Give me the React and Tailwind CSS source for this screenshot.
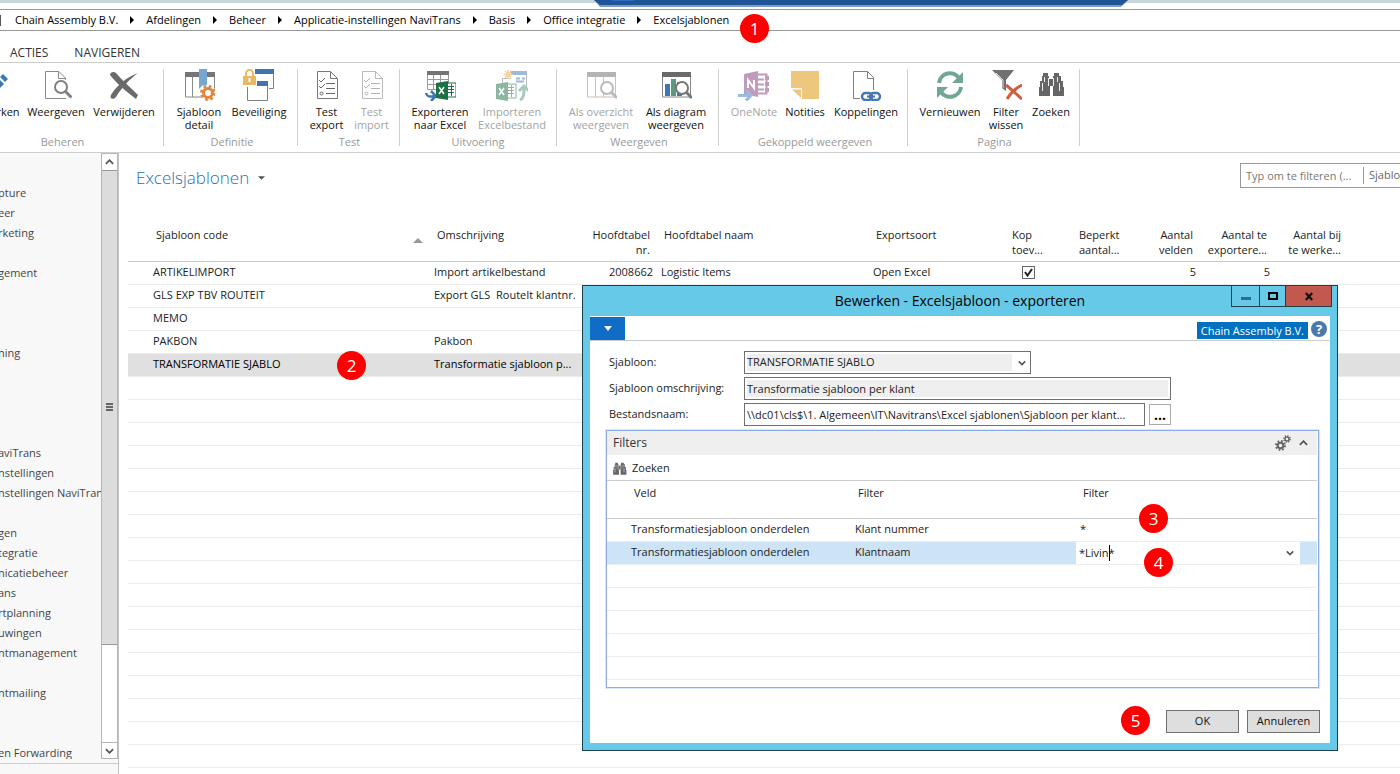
import { useState } from 'react';

const crumbs = [
  'Chain Assembly B.V.',
  'Afdelingen',
  'Beheer',
  'Applicatie-instellingen NaviTrans',
  'Basis',
  'Office integratie',
  'Excelsjablonen',
];

const navItems = [
  'pture', 'eer', 'rketing', '', 'gement', '', '', '', 'ning', '', '', '', '', 'aviTrans',
  'nstellingen', 'nstellingen NaviTrans', '', 'gen', 'tegratie', 'nicatiebeheer', 'ans',
  'rtplanning', 'uwingen', 'ntmanagement', '', 'ntmailing', '', '', 'en Forwarding',
];

const templates = [
  { code: 'ARTIKELIMPORT', name: 'Import artikelbestand', table: '2008662', tableName: 'Logistic Items', kind: 'Open Excel', header: true, fields: 5, exported: 5 },
  { code: 'GLS EXP TBV ROUTEIT', name: 'Export GLS\u00a0 RouteIt klantnr.' },
  { code: 'MEMO', name: '' },
  { code: 'PAKBON', name: 'Pakbon' },
  { code: 'TRANSFORMATIE SJABLO', name: 'Transformatie sjabloon p...', selected: true },
];

function Icon({ children, className }) {
  return (
    <svg viewBox="0 0 32 32" className={className ?? 'h-8 w-8'} fill="none" aria-hidden="true">
      {children}
    </svg>
  );
}

function PencilIcon() {
  return (
    <Icon>
      <path d="M6 30l3-8 12-12 5 5-12 12z" fill="#3c78b8" />
      <path d="M22 8l3-3 5 5-3 3z" fill="#3c78b8" />
    </Icon>
  );
}

function ViewIcon() {
  return (
    <Icon>
      <path d="M26 29.5H5.500V2.500H19l6.500 6.500v3M18.500 2.500V9.500H25.500" stroke="#8a8a8a" />
      <path d="M19 11h8v15h-8z" fill="#fff" />
      <circle cx="21" cy="18" r="6" stroke="#808080" strokeWidth="2" fill="#fff" />
      <path d="M25 22l6.500 6.500" stroke="#808080" strokeWidth="3" />
    </Icon>
  );
}

function DeleteIcon() {
  return (
    <Icon>
      <path d="M2 6c0-3 4-4 6-2 6 7 13 13 22 22l-2 4C19 23 9 15 2 6z" fill="#6a6a6a" />
      <path d="M30 4C22 10 14 18 8 28c-2 3-7 2-5-2C9 16 19 8 30 4z" fill="#6a6a6a" />
    </Icon>
  );
}

function TemplateIcon() {
  return (
    <Icon>
      <path d="M2.500 3.500h29V28H2.500z" stroke="#8a8a8a" fill="#fff" />
      <path d="M2 3h30v5H2z" fill="#757575" />
      <path d="M9.500 8v20M23.500 8v20" stroke="#8a8a8a" />
      <path d="M16 0h8v20l-4-4-4 4z" fill="#78a6d4" />
      <circle cx="25" cy="24" r="8" fill="#fff" />
      <circle cx="25" cy="24" r="4.500" stroke="#e08640" strokeWidth="3" />
      <circle cx="25" cy="24" r="6.500" stroke="#e08640" strokeWidth="3" strokeDasharray="2.600 2.500" />
    </Icon>
  );
}

function SecurityIcon() {
  return (
    <Icon>
      <path d="M12.500 1.500h18v18H26" stroke="#808080" />
      <path d="M12 0h19v5H12z" fill="#3f75ad" />
      <path d="M4.500 14.500h20v17h-20z" stroke="#808080" fill="#fff" />
      <path d="M4 12h21v5H4z" fill="#3f75ad" />
      <path d="M0 5h14v13H0z" fill="#fff" />
      <path d="M3 8V4.500a3.500 3.500 0 0 1 7 0V8" stroke="#e8b866" strokeWidth="2" />
      <path d="M0 7h13v9H0z" fill="#e8b866" />
      <path d="M6.500 9v4" stroke="#fff" strokeWidth="2" />
    </Icon>
  );
}

function ChecklistIcon() {
  return (
    <Icon>
      <path d="M6.500 2.500h13l7 7v20h-20zM19.500 2.500v7h7" stroke="#777" />
      <path d="M8 11l2 2 4-4M8 17l2 2 4-4M15 14.500h9M15 19.500h9M15 24.500h9" stroke="#666" />
      <circle cx="10.500" cy="24.500" r="1.500" stroke="#666" />
    </Icon>
  );
}

function ExcelBadge({ x, y }) {
  return (
    <g>
      <path d={`M${x + 9} ${y + 2}h11v14h-11z`} fill="#fff" stroke="#1d7044" />
      <path d={`M${x + 12} ${y + 5.5}h6M${x + 12} ${y + 8.5}h6M${x + 12} ${y + 11.5}h6M${x + 15.5} ${y + 3}v12`} stroke="#1d7044" />
      <path d={`M${x} ${y + 2}l12-2v19l-12-2z`} fill="#1d7044" />
      <path d={`M${x + 3} ${y + 6}l5 7M${x + 8} ${y + 6}l-5 7`} stroke="#fff" strokeWidth="1.5" />
    </g>
  );
}

function ExportIcon() {
  return (
    <Icon>
      <path d="M3.500 3.500h21v17h-21zM3.500 10.500h21M3.500 15.500h21M9.500 6v14M16.500 6v14" stroke="#9a9a9a" />
      <path d="M3 2h22v4H3z" fill="#757575" />
      <path d="M2 24c1 4 4 4 8 3M7 22l5 5-5 5" stroke="#3c78b8" strokeWidth="2.500" />
      <ExcelBadge x={12} y={12} />
    </Icon>
  );
}

function ImportIcon() {
  return (
    <Icon>
      <path d="M13.500 3.500h17v16M6.500 14V9.500h8" stroke="#777" />
      <path d="M15 2h16v4H15z" fill="#3f75ad" />
      <path d="M20 9.500h4M20 12.500h8M26 9.500h3" stroke="#3f75ad" strokeWidth="2" />
      <path d="M12 1v9M7.500 5.500h9M9 2l6 6.500M15 2L9 8.500" stroke="#eda53c" strokeWidth="1.500" />
      <path d="M24 31c4-2 4-6 4-12M23 22l5-5 5 5" stroke="#4f967c" strokeWidth="3" />
      <ExcelBadge x={0} y={13} />
    </Icon>
  );
}

function OverviewIcon({ chart }) {
  return (
    <Icon>
      <path d="M2.500 3.500h28V28h-28z" stroke="#888" />
      <path d="M2 3h29v5H2z" fill="#6a6a6a" />
      {chart ? (
        <>
          <path d="M5 15h5v12H5z" fill="#3c78b8" />
          <path d="M11 10h5v17h-5z" fill="#5b9a80" />
          <path d="M17 13h5v14h-5z" fill="#3c78b8" />
        </>
      ) : (
        <path d="M10.500 8v20M18.500 8v20" stroke="#888" />
      )}
      <circle cx="22" cy="19" r="6" stroke="#777" strokeWidth="2" fill="#fff" />
      <path d="M26 23l6 6" stroke="#777" strokeWidth="3" />
    </Icon>
  );
}

function OneNoteIcon() {
  return (
    <Icon>
      <path d="M19.500 5.500h9v19h-9M19 10.500h7M19 15.500h7M19 20.500h7" stroke="#80397b" strokeWidth="2" />
      <path d="M27 7h4v4h-4zM27 13h4v4h-4zM27 19h4v4h-4z" fill="#80397b" />
      <path d="M6 5l14-3v26L6 25z" fill="#80397b" />
      <path d="M10 19v-8l6 8v-8" stroke="#fff" strokeWidth="2" />
      <path d="M0 26.500h11M8 21.500l5 5-5 5" stroke="#3c78b8" strokeWidth="3" />
    </Icon>
  );
}

function NoteIcon() {
  return (
    <Icon>
      <path d="M2 2h28v28H13V19H2z" fill="#edc77e" />
      <path d="M3 20.500h9V29z" fill="#edc77e" />
    </Icon>
  );
}

function LinkIcon() {
  return (
    <Icon>
      <path d="M10 29.500H3.500V2.500h14l6 6V21M17.500 2.500v7h6" stroke="#808080" />
      <rect x="12" y="24" width="10" height="7" rx="3.500" stroke="#4478b0" strokeWidth="2.500" />
      <rect x="20" y="24" width="10" height="7" rx="3.500" stroke="#4478b0" strokeWidth="2.500" />
      <path d="M17 27.500h8" stroke="#4478b0" strokeWidth="2" />
    </Icon>
  );
}

function RefreshIcon() {
  return (
    <Icon>
      <path d="M5 14A11 11 0 0 1 25 9" stroke="#71a792" strokeWidth="4" />
      <path d="M29 3v11H18z" fill="#71a792" />
      <path d="M27 18A11 11 0 0 1 7 23" stroke="#71a792" strokeWidth="4" />
      <path d="M3 29V18h11z" fill="#71a792" />
    </Icon>
  );
}

function ClearFilterIcon() {
  return (
    <Icon>
      <path d="M2 1h22l-8 10v11l-4-3v-8z" fill="#707070" />
      <path d="M6 4l7 7v8" stroke="#ddd" />
      <path d="M16 16c5 4 10 9 16 14M32 16c-6 3-12 9-15 14" stroke="#cf5f43" strokeWidth="3" />
    </Icon>
  );
}

function BinocularsIcon({ className }) {
  return (
    <Icon className={className}>
      <path d="M8 4h5v3h1v3h4V7h1V4h5v3h2v5h2v6h1v9h-11V17h-3v10H4v-9h1v-6h2V7h1z" fill="#666" />
      <path d="M9.500 8v5M13.500 9v8M18.500 9v8M22.500 8v5M7.500 14v8M24.500 14v8" stroke="#eee" />
    </Icon>
  );
}

const ribbon = [
  {
    label: 'Beheren',
    className: '-ml-10 w-[204px] pl-[6px]',
    items: [
      { lines: ['Bewerken'], icon: <PencilIcon />, width: 'w-[56px]' },
      { lines: ['Weergeven'], icon: <ViewIcon />, width: 'w-[68px]' },
      { lines: ['Verwijderen'], icon: <DeleteIcon />, width: 'w-[68px]' },
    ],
  },
  {
    label: 'Definitie',
    className: 'w-[134px] pl-[7px]',
    items: [
      { lines: ['Sjabloon', 'detail'], icon: <TemplateIcon />, width: 'w-[56px]' },
      { lines: ['Beveiliging'], icon: <SecurityIcon />, width: 'w-[64px]' },
    ],
  },
  {
    label: 'Test',
    className: 'w-[102px] pl-[6px]',
    items: [
      { lines: ['Test', 'export'], icon: <ChecklistIcon />, width: 'w-[45px]' },
      { lines: ['Test', 'import'], icon: <ChecklistIcon />, width: 'w-[45px]', disabled: true },
    ],
  },
  {
    label: 'Uitvoering',
    className: 'w-[157px] pl-[4px]',
    items: [
      { lines: ['Exporteren', 'naar Excel'], icon: <ExportIcon />, width: 'w-[72px]' },
      { lines: ['Importeren', 'Excelbestand'], icon: <ImportIcon />, width: 'w-[72px]', disabled: true },
    ],
  },
  {
    label: 'Weergeven',
    className: 'w-[162px] pl-[7px]',
    items: [
      { lines: ['Als overzicht', 'weergeven'], icon: <OverviewIcon />, width: 'w-[74px]', disabled: true },
      { lines: ['Als diagram', 'weergeven'], icon: <OverviewIcon chart />, width: 'w-[76px]' },
    ],
  },
  {
    label: 'Gekoppeld weergeven',
    className: 'w-[189px] pl-[8px]',
    items: [
      { lines: ['OneNote'], icon: <OneNoteIcon />, width: 'w-[54px]', disabled: true },
      { lines: ['Notities'], icon: <NoteIcon />, width: 'w-[48px]' },
      { lines: ['Koppelingen'], icon: <LinkIcon />, width: 'w-[74px]' },
    ],
  },
  {
    label: 'Pagina',
    className: 'w-[172px] pl-[6px]',
    items: [
      { lines: ['Vernieuwen'], icon: <RefreshIcon />, width: 'w-[72px]' },
      { lines: ['Filter', 'wissen'], icon: <ClearFilterIcon />, width: 'w-[40px]' },
      { lines: ['Zoeken'], icon: <BinocularsIcon />, width: 'w-[50px]' },
    ],
  },
];

function RibbonButton({ item }) {
  return (
    <button
      type="button"
      disabled={item.disabled}
      className={`${item.width} flex shrink-0 flex-col items-center whitespace-nowrap ${item.disabled ? 'text-[#a3a3a3]' : 'text-[#111]'}`}
    >
      <span className={item.disabled ? 'opacity-50' : ''}>{item.icon}</span>
      <span className="mt-1 text-[11px] leading-[13px]">
        {item.lines.map((line) => (
          <span key={line} className="block">{line}</span>
        ))}
      </span>
    </button>
  );
}

function Ribbon() {
  return (
    <div className="flex h-[90px] shrink-0 overflow-hidden border-b border-[#cfcfcf] pt-[6px]">
      {ribbon.map((group) => (
        <section key={group.label} className={`${group.className} flex h-[77px] shrink-0 flex-col border-r border-[#d0d0d0]`}>
          <div className="flex flex-1">
            {group.items.map((item) => (
              <RibbonButton key={item.lines.join(' ')} item={item} />
            ))}
          </div>
          <p className="-mb-[3px] -ml-1 text-center text-[11px] leading-[14px] text-[#999]">{group.label}</p>
        </section>
      ))}
    </div>
  );
}

function AddressBar() {
  return (
    <nav className="mt-[5px] flex h-[22px] shrink-0 items-center border-y border-[#999] text-[11px] text-black">
      <span className="mr-[14px] h-[11px] w-px bg-[#555]" />
      {crumbs.map((crumb, i) => (
        <span key={crumb} className="flex items-center whitespace-nowrap">
          {i > 0 && (
            <svg viewBox="0 0 4 8" className="mx-3 h-2 w-1" aria-hidden="true">
              <path d="M0 0l4 4-4 4z" fill="#000" />
            </svg>
          )}
          <a href="#">{crumb}</a>
        </span>
      ))}
    </nav>
  );
}

function Chevron({ up, className }) {
  return (
    <svg viewBox="0 0 10 6" className={className ?? 'h-[6px] w-[9px]'} fill="none" aria-hidden="true">
      <path d={up ? 'M1 5l4-4 4 4' : 'M1 1l4 4 4-4'} stroke="#555" strokeWidth="2" />
    </svg>
  );
}

function Sidebar() {
  return (
    <aside className="flex w-[119px] shrink-0 flex-col border-r border-[#c4c4c4] bg-[#f8f8f8]">
      <div className="flex min-h-0 flex-1">
        <ul className="min-w-0 flex-1 overflow-hidden pt-[30px] text-[11px] leading-5 text-[#444]">
          {navItems.map((item, i) => (
            <li key={i} className="-ml-[2px] h-5 whitespace-nowrap">
              <a href="#">{item}</a>
            </li>
          ))}
        </ul>
        <div className="flex w-[17px] flex-col border border-[#b5b5b5] bg-white">
          <div className="flex h-4 items-center justify-center">
            <Chevron up />
          </div>
          <div className="min-h-0 flex-1">
            <div className="flex h-[83%] flex-col items-center justify-center gap-[1px] border-y border-[#999] bg-[#dcdcdc]">
              <span className="h-[2px] w-[7px] bg-[#666]" />
              <span className="h-[2px] w-[7px] bg-[#666]" />
              <span className="h-[2px] w-[7px] bg-[#666]" />
            </div>
          </div>
          <div className="flex h-4 items-center justify-center border-t border-[#b5b5b5]">
            <Chevron />
          </div>
        </div>
      </div>
      <div className="mt-1 h-[11px] border-t border-[#ccc]" />
    </aside>
  );
}

function TemplateTable() {
  const fillers = Array.from({ length: 18 });
  return (
    <table className="w-full table-fixed border-collapse text-left text-[11px] text-[#222]">
      <colgroup>
        <col className="w-[21px]" />
        <col className="w-[281px]" />
        <col className="w-[150px]" />
        <col className="w-[77px]" />
        <col className="w-[212px]" />
        <col className="w-[136px]" />
        <col className="w-[67px]" />
        <col className="w-[54px]" />
        <col className="w-[74px]" />
        <col className="w-[74px]" />
        <col className="w-[74px]" />
        <col />
      </colgroup>
      <thead>
        <tr className="h-[34px] border-b border-[#ccc] align-top leading-[15px] [&>th]:px-[7px] [&>th]:py-0 [&>th]:font-normal [&>th]:whitespace-nowrap">
          <th />
          <th>
            <div className="flex justify-between">
              Sjabloon code
              <svg viewBox="0 0 10 5" className="mt-[11px] h-[5px] w-[10px]" aria-hidden="true">
                <path d="M0 5l5-5 5 5z" fill="#999" />
              </svg>
            </div>
          </th>
          <th>Omschrijving</th>
          <th className="text-right">Hoofdtabel<br />nr.</th>
          <th>Hoofdtabel naam</th>
          <th>Exportsoort</th>
          <th>Kop<br />toev...</th>
          <th>Beperkt<br />aantal...</th>
          <th className="text-right">Aantal<br />velden</th>
          <th className="text-right">Aantal te<br />exportere...</th>
          <th className="text-right">Aantal bij<br />te werke...</th>
          <th />
        </tr>
      </thead>
      <tbody>
        {templates.map((row) => (
          <tr
            key={row.code}
            className={`h-[23px] border-b border-[#ececec] [&>td]:px-1 [&>td]:py-0 [&>td]:whitespace-nowrap ${row.selected ? 'bg-[#e0e0e0] text-black' : ''}`}
          >
            <td />
            <td>{row.code}</td>
            <td>{row.name}</td>
            <td className="text-right">{row.table}</td>
            <td>{row.tableName}</td>
            <td>{row.kind}</td>
            <td>
              {row.header && (
                <span className="relative ml-[13px] block h-[13px] w-[13px]">
                  <input
                    type="checkbox"
                    defaultChecked
                    aria-label="Kop toevoegen"
                    className="block h-[13px] w-[13px] appearance-none border border-[#666] bg-white"
                  />
                  <svg viewBox="0 0 13 13" className="pointer-events-none absolute inset-0" fill="none" aria-hidden="true">
                    <path d="M3 6l2.500 3.500L10 3" stroke="#222" strokeWidth="2" />
                  </svg>
                </span>
              )}
            </td>
            <td />
            <td className="text-right">{row.fields}</td>
            <td className="text-right">{row.exported}</td>
            <td />
            <td />
          </tr>
        ))}
        {fillers.map((_, i) => (
          <tr key={i} className="h-[23px] border-b border-[#ececec]">
            <td colSpan={12} />
          </tr>
        ))}
      </tbody>
    </table>
  );
}

function MainPanel() {
  return (
    <main className="min-w-0 flex-1 overflow-hidden pl-[9px]">
      <div className="flex h-[74px] items-start justify-between">
        <h1 className="flex items-center gap-[9px] pt-[13px] pl-2 text-[17px] leading-6 font-light text-[#1f6fb2]">
          Excelsjablonen
          <svg viewBox="0 0 8 4" className="h-1 w-[7px]" aria-hidden="true">
            <path d="M0 0h8l-4 4z" fill="#555" />
          </svg>
        </h1>
        <div className="mt-[10px] flex h-[25px] w-[160px] items-center overflow-hidden border border-r-0 border-[#999] text-[11px] whitespace-nowrap">
          <input
            aria-label="Typ om te filteren"
            placeholder="Typ om te filteren (..."
            className="h-full w-[122px] shrink-0 pl-[5px] placeholder:text-[#777]"
          />
          <span className="h-[17px] w-px shrink-0 bg-[#999]" />
          <button type="button" className="pl-[5px] text-[#666]">Sjabloon code</button>
        </div>
      </div>
      <TemplateTable />
    </main>
  );
}

function FilterPanel() {
  const [filter, setFilter] = useState('*Livin*');
  return (
    <section className="mt-1 mr-[11px] ml-4 h-[258px] border border-[#8aaee2] pr-px shadow-[0_0_0_1px_#dbe7f8]">
      <div className="flex h-[24px] items-center bg-[#efefef] pr-[9px] pl-[6px]">
        <h2 className="flex-1 text-[12px] text-[#333]">Filters</h2>
        <svg viewBox="0 0 16 16" className="mr-[8px] h-4 w-4" fill="none" aria-hidden="true">
          <circle cx="5.500" cy="10.500" r="2.800" stroke="#666" strokeWidth="2" />
          <circle cx="5.500" cy="10.500" r="4.500" stroke="#666" strokeWidth="2" strokeDasharray="1.700 1.830" />
          <circle cx="12" cy="4" r="2" stroke="#666" strokeWidth="1.500" />
          <circle cx="12" cy="4" r="3.200" stroke="#666" strokeWidth="1.500" strokeDasharray="1.200 1.310" />
        </svg>
        <Chevron up className="h-[6px] w-[9px]" />
      </div>
      <div className="flex h-[26px] items-center border-b border-[#ccc] pt-[2px] pl-[4px]">
        <button type="button" className="flex items-center gap-1 text-[11px] text-[#222]">
          <BinocularsIcon className="h-[18px] w-[17px]" />
          Zoeken
        </button>
      </div>
      <table className="w-full table-fixed border-collapse text-left text-[11px] text-[#222]">
        <colgroup>
          <col className="w-[20px]" />
          <col className="w-[224px]" />
          <col className="w-[225px]" />
          <col />
        </colgroup>
        <thead>
          <tr className="h-[37px] border-b border-[#ccc] align-top leading-[15px] [&>th]:px-[7px] [&>th]:pt-1 [&>th]:font-normal">
            <th />
            <th>Veld</th>
            <th>Filter</th>
            <th>Filter</th>
          </tr>
        </thead>
        <tbody>
          <tr className="h-[23px] border-b border-[#ececec] [&>td]:px-1 [&>td]:py-0">
            <td />
            <td>Transformatiesjabloon onderdelen</td>
            <td>Klant nummer</td>
            <td>*</td>
          </tr>
          <tr className="h-[23px] border-b border-[#ececec] bg-[#cde4f6] [&>td]:py-0">
            <td />
            <td className="px-1">Transformatiesjabloon onderdelen</td>
            <td className="px-1">Klantnaam</td>
            <td className="pr-[17px]">
              <div className="flex h-[22px] items-center bg-white pr-[6px]">
                <div className="relative flex-1">
                  <input
                    aria-label="Klantnaam"
                    value={filter}
                    onChange={(e) => setFilter(e.target.value)}
                    className="block h-[22px] w-full pl-[3px] outline-none"
                  />
                  <span className="absolute top-[3px] left-[33px] h-4 w-px bg-black" />
                </div>
                <Chevron className="h-[6px] w-[8px]" />
              </div>
            </td>
          </tr>
          {[1, 2, 3, 4, 5].map((n) => (
            <tr key={n} className="h-[23px] border-b border-[#ececec]">
              <td colSpan={4} />
            </tr>
          ))}
        </tbody>
      </table>
    </section>
  );
}

function ExportDialog() {
  return (
    <div
      role="dialog"
      aria-labelledby="dialog-title"
      className="absolute top-[285px] left-[582px] flex w-[756px] flex-col border border-[#1c3f4e] bg-[#66c9e8] px-[7px] pb-[7px] text-[#222]"
    >
      <div className="relative flex h-[29px] items-center justify-center">
        <h2 id="dialog-title" className="text-[14px] text-black">Bewerken - Excelsjabloon - exporteren</h2>
        <div className="absolute top-0 right-[-2px] flex h-[21px] border border-t-0 border-[#1c3f4e]">
          <button type="button" aria-label="Minimaliseren" className="flex w-[28px] items-center justify-center border-r border-[#1c3f4e]">
            <span className="mt-[5px] h-[3px] w-[10px] bg-[#2d6d86]" />
          </button>
          <button type="button" aria-label="Maximaliseren" className="flex w-[26px] items-center justify-center border-r border-[#1c3f4e]">
            <span className="h-[8px] w-[10px] border-2 border-black" />
          </button>
          <button type="button" aria-label="Sluiten" className="flex w-[45px] items-center justify-center bg-[#c1594f]">
            <svg viewBox="0 0 10 10" className="h-[9px] w-[10px]" aria-hidden="true">
              <path d="M1.500 1l7 8M8.500 1l-7 8" stroke="#111" strokeWidth="2.500" />
            </svg>
          </button>
        </div>
      </div>
      <div className="bg-white">
        <div className="flex h-[26px] items-end border-t border-b border-t-[#8fb9c9] border-b-[#ccc]">
          <button type="button" aria-label="Menu" className="flex h-[23px] w-[35px] items-center justify-center bg-[#0f6cc7]">
            <svg viewBox="0 0 8 5" className="h-[5px] w-[8px]" aria-hidden="true">
              <path d="M0 0h8l-4 5z" fill="#fff" />
            </svg>
          </button>
          <span className="mr-[3px] mb-[1px] ml-auto bg-[#0070c0] px-[4px] text-[11px] leading-[17px] text-white">
            Chain Assembly B.V.
          </span>
          <button
            type="button"
            aria-label="Help"
            className="mr-[3px] mb-[3px] h-4 w-4 rounded-full bg-[#4a79ae] text-[13px] leading-4 font-bold text-white"
          >
            ?
          </button>
        </div>
        <form onSubmit={(e) => e.preventDefault()}>
          <div className="flex flex-col gap-[3px] pt-[10px] pl-[19px] text-[11px]">
            <div className="flex h-[23px] items-center">
              <label htmlFor="template" className="w-[135px]">Sjabloon:</label>
              <div className="relative flex h-[23px] w-[287px] items-center border border-[#707070] bg-white pr-[18px] pl-[2px]">
                <select id="template" className="h-[17px] w-full appearance-none bg-[#efefef]">
                  <option>TRANSFORMATIE SJABLO</option>
                </select>
                <Chevron className="pointer-events-none absolute right-[4px] h-[6px] w-[8px]" />
              </div>
            </div>
            <div className="flex h-[23px] items-center">
              <label htmlFor="description" className="w-[135px]">Sjabloon omschrijving:</label>
              <input
                id="description"
                defaultValue="Transformatie sjabloon per klant"
                className="h-[23px] w-[427px] border border-[#707070] bg-[#efefef] px-[2px] shadow-[inset_0_0_0_2px_white]"
              />
            </div>
            <div className="flex h-[23px] items-center">
              <label htmlFor="filename" className="w-[135px]">Bestandsnaam:</label>
              <input
                id="filename"
                defaultValue="\\dc01\cls$\1. Algemeen\IT\Navitrans\Excel sjablonen\Sjabloon per klant..."
                className="h-[23px] w-[401px] border border-[#707070] px-[2px]"
              />
              <button type="button" className="ml-1 h-[21px] w-[22px] border border-[#aaa] text-[14px] leading-[18px] font-bold text-black">
                ...
              </button>
            </div>
          </div>
          <FilterPanel />
          <div className="flex h-[55px] justify-end gap-2 pt-[22px] pr-[10px] text-[11px] text-[#111]">
            <button type="submit" className="h-[23px] w-[73px] border border-[#707070] bg-[#dedede]">OK</button>
            <button type="button" className="h-[23px] w-[73px] border border-[#707070] bg-[#dedede]">Annuleren</button>
          </div>
        </form>
      </div>
    </div>
  );
}

function Marker({ n, className }) {
  return (
    <span className={`absolute flex h-[29px] w-[29px] items-center justify-center rounded-full bg-[#fe0000] text-[17px] text-white ${className}`}>
      {n}
    </span>
  );
}

export default function App() {
  return (
    <div className='relative flex h-screen flex-col overflow-hidden bg-white font-["Open_Sans","Noto_Sans",sans-serif]'>
      <div className="h-1 shrink-0 border-b border-white bg-[#c6d7dc]" />
      <svg viewBox="0 0 534 7" className="absolute top-0 left-[594px] h-[7px] w-[534px]" aria-hidden="true">
        <path d="M0 0h534l-7 7H6z" fill="#7f9bbd" />
        <path d="M0 0h534l-6 5H6z" fill="#1f5597" />
        <path d="M18 0h22v1H18z" fill="#2b6cc0" />
      </svg>
      <AddressBar />
      <div className="flex h-[32px] shrink-0 items-center gap-[26px] border-b border-[#ccc] pt-[12px] pl-[10px] text-[12px] text-[#333]">
        <button type="button">ACTIES</button>
        <button type="button">NAVIGEREN</button>
      </div>
      <Ribbon />
      <div className="flex min-h-0 flex-1">
        <Sidebar />
        <MainPanel />
      </div>
      <ExportDialog />
      <Marker n={1} className="top-[14px] left-[740px]" />
      <Marker n={2} className="top-[351px] left-[337px]" />
      <Marker n={3} className="top-[504px] left-[1139px]" />
      <Marker n={4} className="top-[548px] left-[1144px]" />
      <Marker n={5} className="top-[706px] left-[1121px]" />
    </div>
  );
}
